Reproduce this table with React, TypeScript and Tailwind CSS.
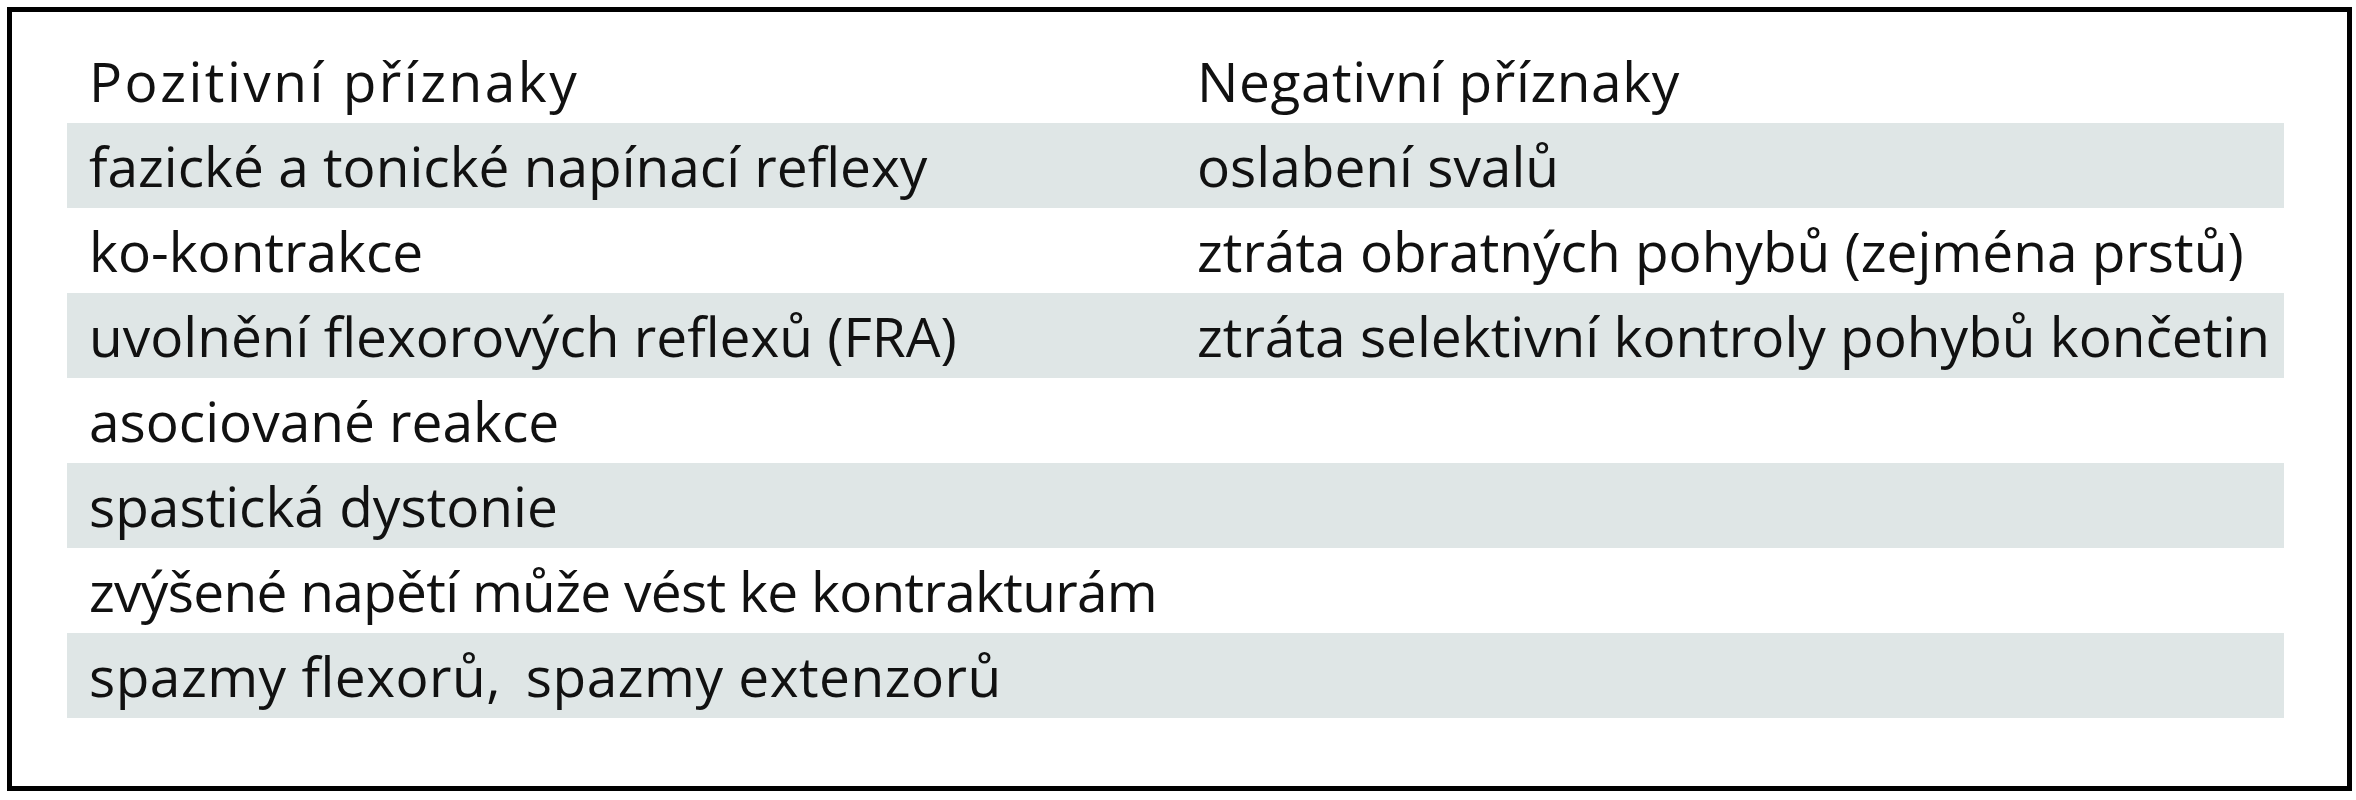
const rows: [React.ReactNode, string][] = [
  ["fazické a tonické napínací reflexy", "oslabení svalů"],
  ["ko-kontrakce", "ztráta obratných pohybů (zejména prstů)"],
  ["uvolnění flexorových reflexů (FRA)", "ztráta selektivní kontroly pohybů končetin"],
  ["asociované reakce", ""],
  ["spastická dystonie", ""],
  [<span className="tracking-[-0.7px]">zvýšené napětí může vést ke kontrakturám</span>, ""],
  [
    <span className="tracking-[0.5px]">
      spazmy flexorů,<span className="inline-block w-[10px]" /> spazmy extenzorů
    </span>,
    "",
  ],
];

export default function App() {
  return (
    <div className="w-[2356px] h-[800px] bg-white pt-[7px] pl-[7px]">
      <div className="w-[2345px] h-[784px] border-[5px] border-black bg-white pt-[26px] pl-[55px] pr-[63px] font-['Open_Sans',sans-serif] text-[55px] leading-[85px] text-[#111]">
        <div className="grid grid-cols-[1108px_1fr]">
          <div className="pl-[22px] tracking-[2.5px]">Pozitivní příznaky</div>
          <div className="pl-[22px] tracking-[0.6px]">Negativní příznaky</div>
        </div>
        {rows.map(([a, b], i) => (
          <div
            key={i}
            className={`grid grid-cols-[1108px_1fr] ${i % 2 === 0 ? "bg-[#dfe6e6]" : "bg-white"}`}
          >
            <div className="pl-[22px] whitespace-nowrap">{a}</div>
            <div className="pl-[22px] whitespace-nowrap">{b}</div>
          </div>
        ))}
      </div>
    </div>
  );
}
